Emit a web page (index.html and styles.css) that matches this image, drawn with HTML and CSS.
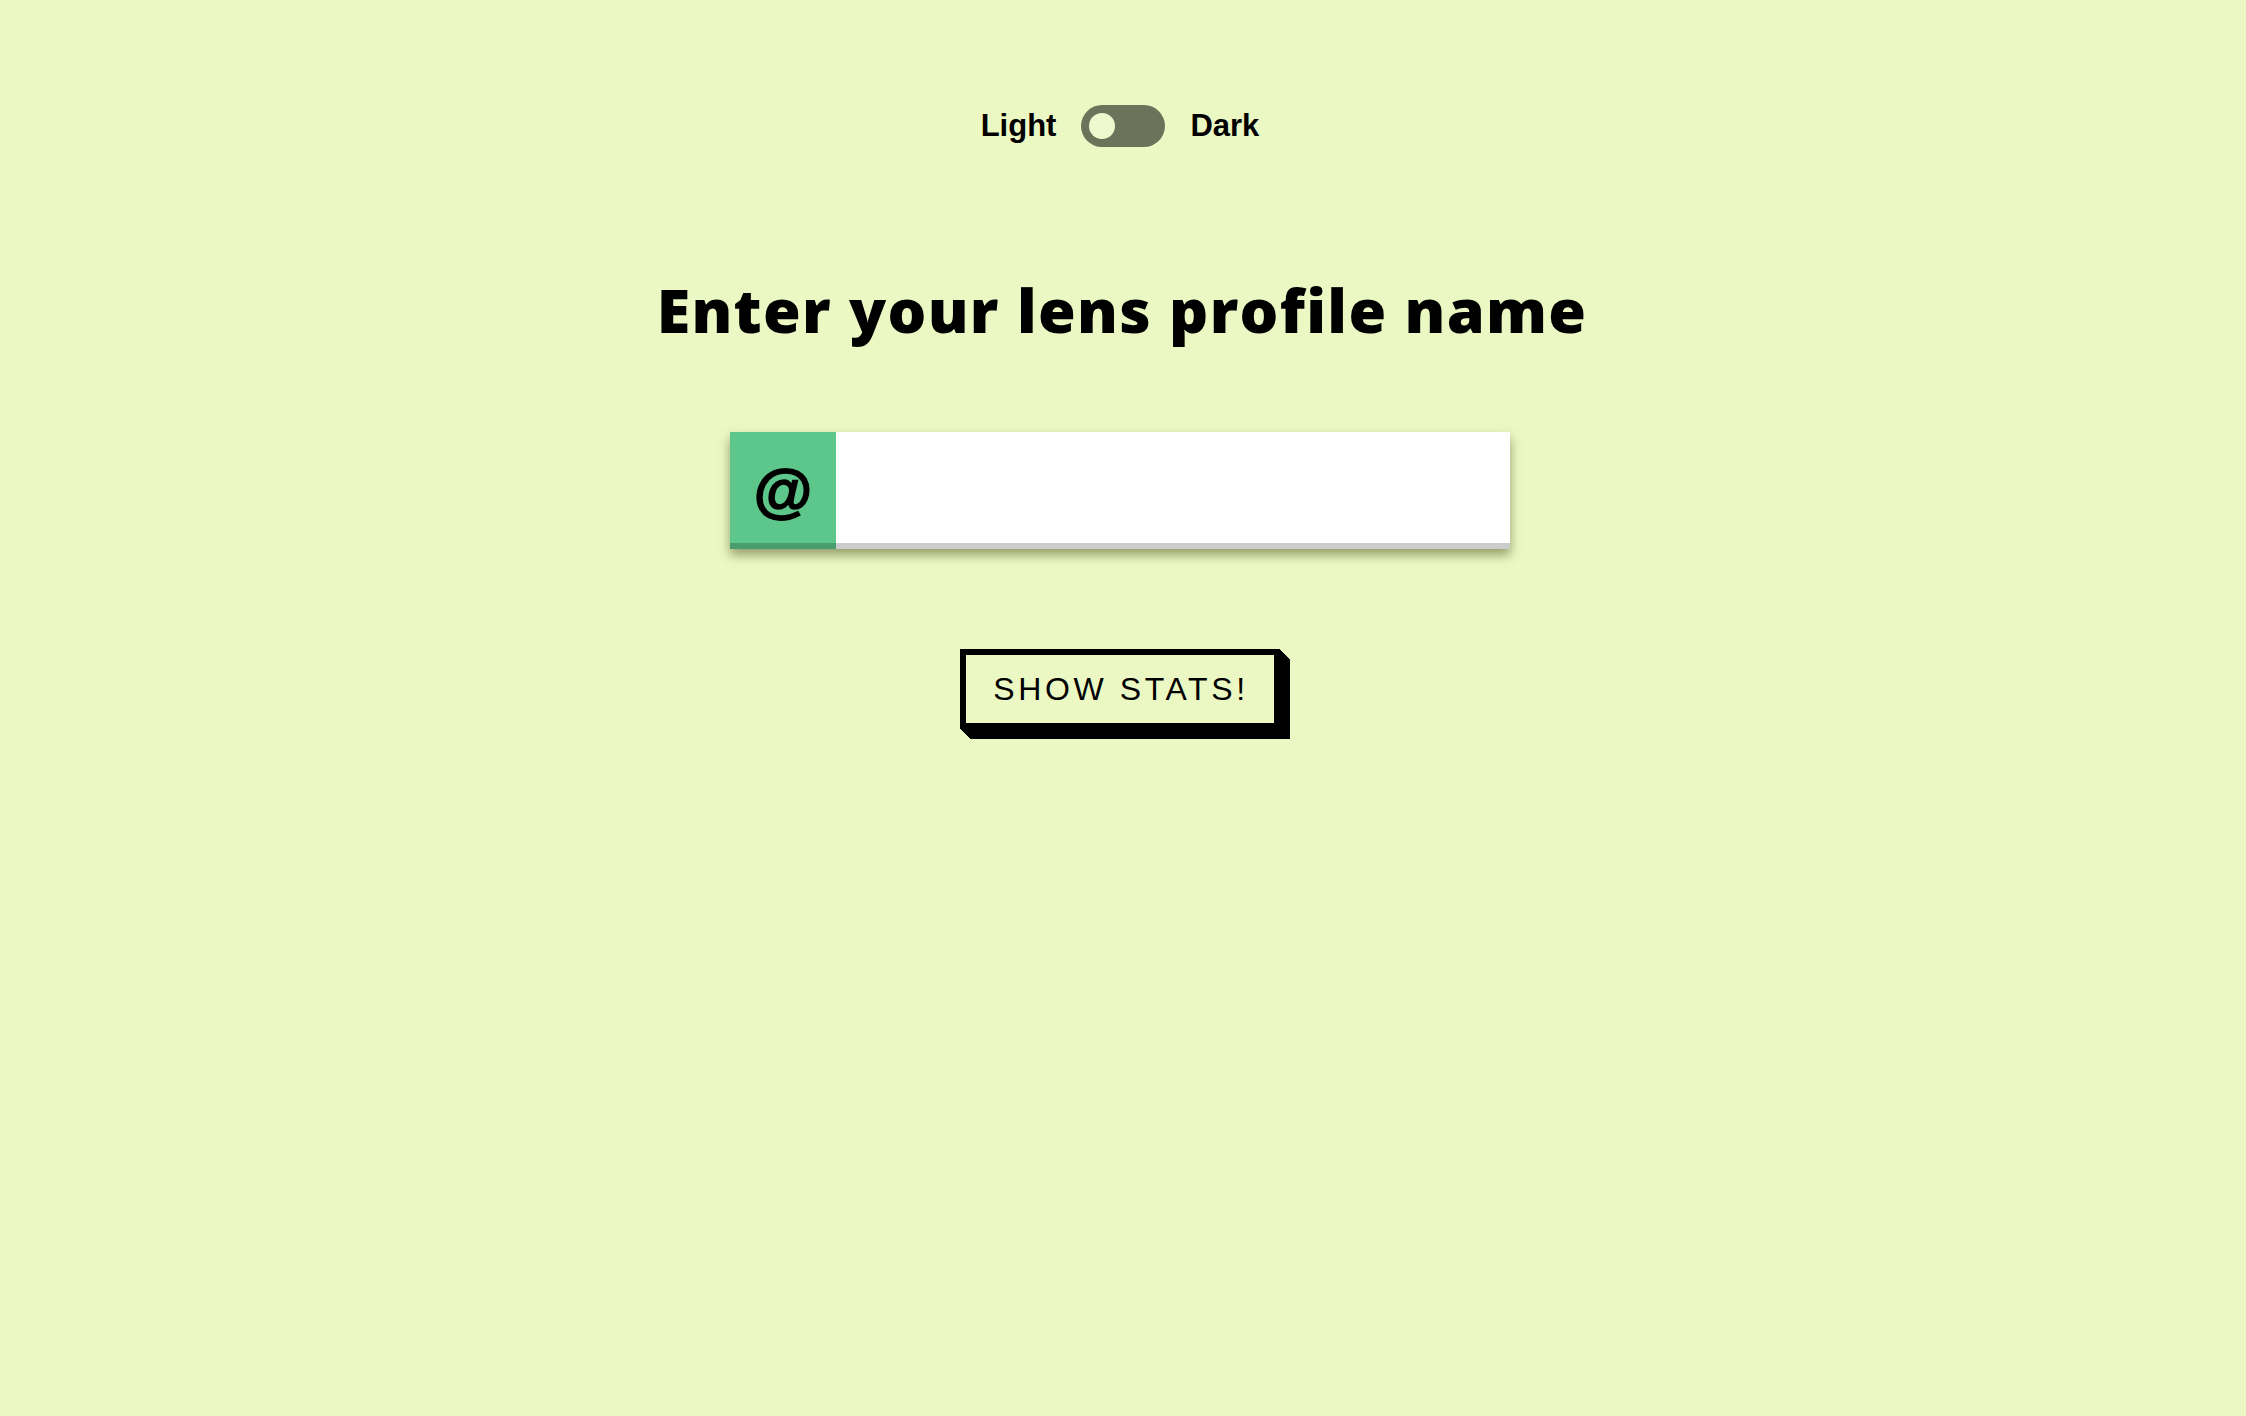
FILE: index.html
```
<!DOCTYPE html>
<html lang="en">
<head>
<meta charset="utf-8">
<title>Lens stats</title>
<link rel="stylesheet" href="styles.css">
</head>
<body>
<main class="page">
  <div class="theme-switch">
    <span class="theme-label">Light</span>
    <span class="toggle"><span class="knob"></span></span>
    <span class="theme-label">Dark</span>
  </div>
  <h1 class="title">Enter your lens profile name</h1>
  <div class="field">
    <span class="at">@</span>
    <input class="handle" type="text" aria-label="Profile name">
  </div>
  <button class="show-btn" type="button">SHOW STATS!</button>
</main>
</body>
</html>
```
FILE: styles.css
```
html, body {
  margin: 0;
  padding: 0;
  background: #ecf8c3;
}
.page {
  min-height: 1416px;
  display: flex;
  flex-direction: column;
  align-items: center;
  padding-top: 105px;
  box-sizing: border-box;
}
.theme-switch {
  display: flex;
  align-items: center;
  gap: 25px;
  margin-right: 6px;
}
.theme-label {
  font-family: "Liberation Sans", Arial, sans-serif;
  font-weight: 700;
  font-size: 31px;
  color: #000;
}
.toggle {
  width: 84px;
  height: 42px;
  border-radius: 21px;
  background: #6d735a;
  display: flex;
  align-items: center;
  padding-left: 8px;
  box-sizing: border-box;
}
.knob {
  width: 26px;
  height: 26px;
  border-radius: 50%;
  background: #eff8cd;
}
.title {
  font-family: "Open Sans", Lato, sans-serif;
  font-weight: 800;
  font-size: 61px;
  letter-spacing: 1.3px;
  color: #000;
  margin: 129px 0 0 0;
  line-height: 1.1;
  margin-right: 2px;
}
.field {
  display: flex;
  width: 780px;
  height: 117px;
  margin-top: 89px;
  margin-right: 6px;
  box-shadow: 0 6px 10px rgba(60, 70, 20, 0.5);
}
.at {
  width: 106px;
  flex: none;
  background: #5dc68a;
  border-bottom: 6px solid #4a9d6c;
  box-sizing: border-box;
  display: flex;
  align-items: center;
  justify-content: center;
  font-family: "Liberation Sans", Arial, sans-serif;
  font-weight: 700;
  font-size: 60px;
  color: #000;
  -webkit-text-stroke: 1.6px #000;
  padding-top: 6px;
}
.handle {
  flex: 1;
  border: 0;
  border-bottom: 6px solid #cccccc;
  background: #fff;
  margin: 0;
  padding: 0 20px;
  font-size: 40px;
  outline: none;
}
.show-btn {
  margin-top: 100px;
  margin-right: 6px;
  background: #ecf8c3;
  border: 6px solid #000;
  padding: 17px 25px 16px 27px;
  font-family: "Liberation Sans", Arial, sans-serif;
  font-size: 32px;
  letter-spacing: 3.6px;
  color: #000;
  line-height: 35px;
  box-shadow: 1px 1px 0 #000, 2px 2px 0 #000, 3px 3px 0 #000, 4px 4px 0 #000, 5px 5px 0 #000,
    6px 6px 0 #000, 7px 7px 0 #000, 8px 8px 0 #000, 9px 9px 0 #000, 10px 10px 0 #000;
  cursor: pointer;
}
```
